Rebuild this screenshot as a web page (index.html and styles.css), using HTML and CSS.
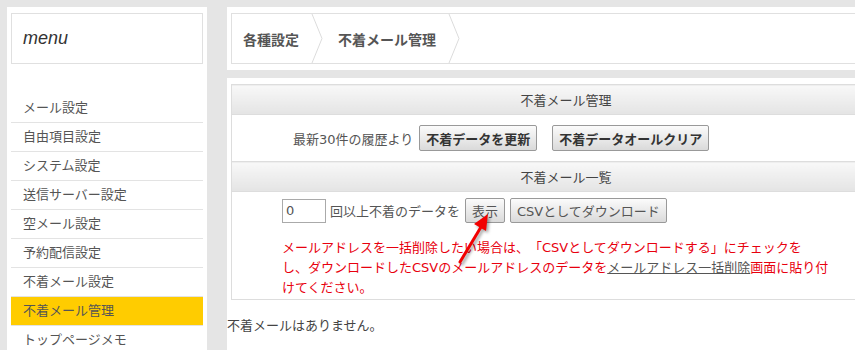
FILE: index.html
```html
<!DOCTYPE html>
<html lang="ja">
<head>
    <meta charset="UTF-8">
    <title>不着メール管理</title>
    <link rel="stylesheet" href="styles.css">
</head>
<body>
    <div class="layout">
        <aside class="sidebar">
            <div class="menu-title">menu</div>
            <ul class="menu">
                <li>メール設定</li>
                <li>自由項目設定</li>
                <li>システム設定</li>
                <li>送信サーバー設定</li>
                <li>空メール設定</li>
                <li>予約配信設定</li>
                <li>不着メール設定</li>
                <li class="active">不着メール管理</li>
                <li>トップページメモ</li>
            </ul>
        </aside>

        <div class="content">
            <div class="panel crumb-panel">
                <div class="breadcrumb">
                    <span>各種設定</span>
                    <svg class="chevron" viewBox="0 0 12 49"><path d="M1 0 L11 24.5 L1 49" fill="none" stroke="#dcdcdc" stroke-width="1"/></svg>
                    <span>不着メール管理</span>
                    <svg class="chevron" viewBox="0 0 12 49"><path d="M1 0 L11 24.5 L1 49" fill="none" stroke="#dcdcdc" stroke-width="1"/></svg>
                </div>
            </div>

            <div class="panel main-panel">
                <table class="bounce-table">
                    <tr><th>不着メール管理</th></tr>
                    <tr>
                        <td class="row-refresh">
                            <div class="controls">
                                <span>最新30件の履歴より</span>
                                <button class="btn btn-strong">不着データを更新</button>
                                <button class="btn btn-strong btn-clear">不着データオールクリア</button>
                            </div>
                        </td>
                    </tr>
                    <tr><th>不着メール一覧</th></tr>
                    <tr>
                        <td class="row-list">
                            <div class="controls controls-list">
                                <input type="text" class="count" value="0">
                                <span>回以上不着のデータを</span>
                                <button class="btn btn-small">表示</button>
                                <button class="btn btn-small">CSVとしてダウンロード</button>
                            </div>
                            <p class="notice">メールアドレスを一括削除したい場合は、「CSVとしてダウンロードする」にチェックを<br>し、ダウンロードしたCSVのメールアドレスのデータを<a href="#">メールアドレス一括削除</a>画面に貼り付<br>けてください。</p>
                        </td>
                    </tr>
                </table>
                <p class="empty">不着メールはありません。</p>
            </div>
        </div>
    </div>

    <svg class="arrow" viewBox="0 0 45 60">
        <line x1="8" y1="52" x2="29" y2="17" stroke="#f20000" stroke-width="3" stroke-linecap="round"/>
        <polygon points="36,4 34,21 22,14" fill="#f20000"/>
    </svg>
</body>
</html>
```

FILE: styles.css
```css
html, body {
    margin: 0;
    height: 100%;
    overflow: hidden;
}

body {
    background: #e5e5e5;
    font-family: "DejaVu Sans", "Noto Sans CJK JP", sans-serif;
    font-size: 13px;
    color: #555;
    text-spacing-trim: space-all;
}

.layout {
    display: flex;
    gap: 20px;
    padding: 7px 0 0 7px;
}

.sidebar {
    width: 200px;
    flex: none;
    box-sizing: border-box;
    background: #fff;
    padding: 6px 4px 0 4px;
    min-height: 400px;
}

.menu-title {
    border: 1px solid #e0e0e0;
    height: 49px;
    line-height: 49px;
    padding-left: 11px;
    font-family: "Liberation Sans", sans-serif;
    font-style: italic;
    font-size: 18px;
    color: #333;
}

.menu {
    list-style: none;
    margin: 30px 0 0;
    padding: 0;
}

.menu li {
    height: 28px;
    line-height: 28px;
    padding-left: 12px;
    border-bottom: 1px solid #e3e3e3;
    color: #555;
}

.menu li.active {
    background: #ffcc00;
}

.content {
    width: 700px;
    flex: none;
    display: flex;
    flex-direction: column;
    gap: 8px;
}

.panel {
    background: #fff;
}

.crumb-panel {
    padding: 6px 0 6px 4px;
}

.breadcrumb {
    border: 1px solid #e0e0e0;
    height: 49px;
    display: flex;
    align-items: center;
    padding-left: 11px;
    font-size: 14px;
    font-weight: bold;
    color: #555;
}

.chevron {
    width: 12px;
    height: 49px;
    margin: 0 15px 0 12px;
}

.main-panel {
    padding: 6px 0 40px;
}

.bounce-table {
    width: 670px;
    margin-left: 4px;
    border-collapse: collapse;
    border: 1px solid #ddd;
}

.bounce-table th {
    height: 29px;
    padding: 0;
    background: linear-gradient(#f8f8f8, #e4e4e4);
    border-top: 1px solid #ddd;
    border-bottom: 1px solid #ddd;
    font-weight: normal;
    color: #444;
}

.bounce-table td {
    padding: 0;
}

.row-refresh {
    height: 46px;
    padding-left: 61px !important;
}

.row-list {
    padding: 6px 0 1px 50px !important;
}

.controls {
    display: flex;
    align-items: center;
    gap: 6px;
}

.controls-list {
    gap: 4px;
}

.btn {
    font-family: inherit;
    font-size: 13px;
    height: 26px;
    padding: 0 6px;
    background: linear-gradient(#fbfbfb, #dadada);
    border: 1px solid #999;
    border-radius: 2px;
    color: #333;
}

.btn-strong {
    font-weight: bold;
}

.btn-clear {
    margin-left: 9px;
}

.btn-small {
    height: 25px;
    color: #555;
    margin-left: 1px;
}

.count {
    width: 44px;
    height: 24px;
    box-sizing: border-box;
    border: 1px solid #aaa;
    padding: 0 3px;
    font-family: inherit;
    font-size: 13px;
    color: #555;
}

.notice {
    margin: 15px 0 0;
    line-height: 20px;
    color: #e8000e;
}

.notice a {
    color: #555;
}

.empty {
    margin: 16px 0 0;
    line-height: 20px;
    color: #444;
}

.arrow {
    position: absolute;
    left: 452px;
    top: 210px;
    width: 45px;
    height: 60px;
    filter: drop-shadow(2px 2px 1.5px rgba(0, 0, 0, 0.35));
}
```
